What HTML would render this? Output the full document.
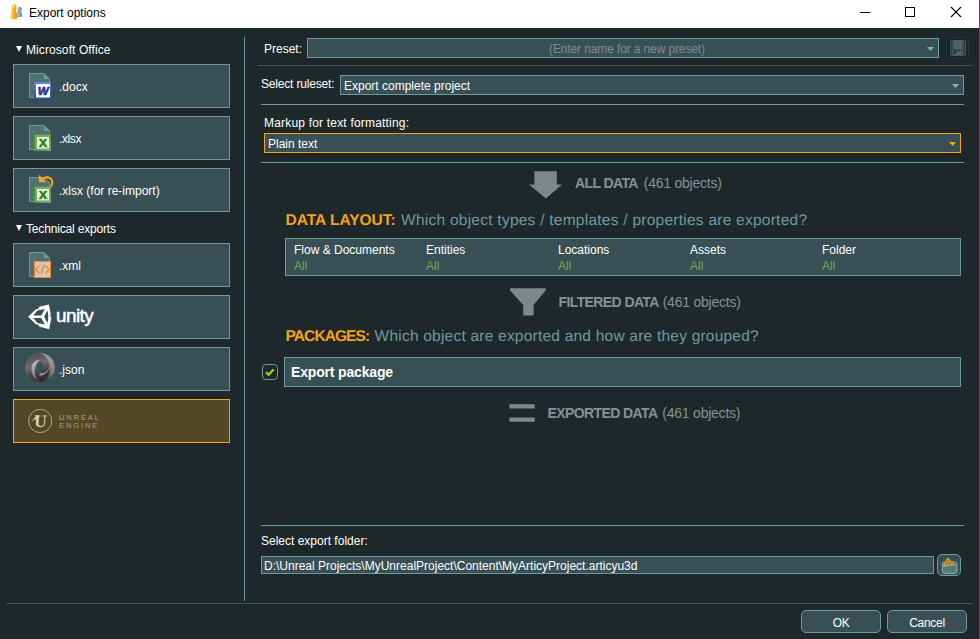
<!DOCTYPE html>
<html><head><meta charset="utf-8"><title>Export options</title>
<style>
html,body{margin:0;padding:0;}
body{width:980px;height:639px;position:relative;overflow:hidden;background:#1e282a;font-family:"Liberation Sans",sans-serif;font-size:12px;color:#fff;}
.abs{position:absolute;}
.t{position:absolute;white-space:nowrap;line-height:16px;height:16px;}
#titlebar{left:0;top:0;width:979px;height:28px;background:#fff;}
#edge{left:979px;top:0;width:1px;height:639px;background:#a8179c;}
.btn{position:absolute;left:13px;width:215px;height:42px;border:1px solid #6a9c99;background:#385055;}
.btn.sel{border-color:#f5a21c;background:#544726;}
.hl{position:absolute;height:1px;background:#6a9c99;}
.hl.dim{background:#3c565a;}
.combo{position:absolute;border:1px solid #6a9c99;background:#385055;box-sizing:border-box;}
.gray{color:#879194;}
#ph{color:#7f8c8e}
.teal{color:#6f9a9c;letter-spacing:.25px}
.org{color:#f6a21b;font-weight:bold;}
.grn{color:#66ad3e;}
.rb{position:absolute;box-sizing:border-box;border:1px solid #6a9c99;background:#385055;border-radius:5px;text-align:center;line-height:25px;}
.h13{font-size:14px;}
.h13 b{letter-spacing:-.6px}
.h13 i{font-style:normal;letter-spacing:-.23px}
.h15{font-size:15.5px;text-rendering:geometricPrecision;}
svg{overflow:visible}
</style></head><body>
<div id="titlebar" class="abs"></div>
<div id="edge" class="abs"></div>
<!-- title icon -->
<svg class="abs" style="left:8px;top:3px" width="16" height="18" viewBox="0 0 16 18">
<defs>
<linearGradient id="pg1" x1="0" y1="0" x2="1" y2="0"><stop offset="0" stop-color="#ffe14a"/><stop offset=".45" stop-color="#fbb024"/><stop offset="1" stop-color="#f58a1a"/></linearGradient>
<linearGradient id="pg2" x1="0" y1="0" x2="1" y2="0"><stop offset="0" stop-color="#a9c6d2"/><stop offset="1" stop-color="#5d8c9e"/></linearGradient>
</defs>
<path d="M9.500 6.300c0-1.500 1-2.500 2.200-2.500s2.200 1 2.200 2.500c0 1-.4 1.600-.9 2.100.9 1.200 1.200 3.200 1.200 5.100-.9.500-3.500.6-5.200.2z" fill="url(#pg2)"/>
<path d="M3.500 4.800c0-2 1-3.500 2.600-3.500s2.600 1.500 2.600 3.500c0 1.200-.4 2-.9 2.600 1.300 1.900 1.900 5 1.900 7.900-1.500.9-5.900.9-7.400 0 0-2.900.6-6 1.900-7.900-.4-.6-.7-1.400-.7-2.600z" fill="url(#pg1)"/>
<ellipse cx="5.600" cy="3.400" rx="1" ry="1.300" fill="#fff" opacity=".55"/>
</svg>
<span class="t" id="title" style="left:29px;top:5px;color:#000;">Export options</span>
<!-- window controls -->
<svg class="abs" style="left:850px;top:0" width="129" height="28" viewBox="0 0 129 28">
<path d="M10 12.500h10.500" stroke="#000" stroke-width="1" fill="none"/>
<rect x="55.500" y="7.500" width="9" height="9" stroke="#000" stroke-width="1" fill="none"/>
<path d="M101 7l10 10M111 7l-10 10" stroke="#000" stroke-width="1.100" fill="none"/>
</svg>

<!-- left panel -->
<svg class="abs" style="left:16px;top:46px" width="6" height="6"><path d="M0 0h6L3 6z" fill="#fff"/></svg>
<span class="t" id="mso" style="left:26px;top:42px;letter-spacing:.09px">Microsoft Office</span>
<div class="btn" style="top:64px"></div>
<div class="btn" style="top:116px"></div>
<div class="btn" style="top:168px"></div>
<svg class="abs" style="left:16px;top:225px" width="6" height="6"><path d="M0 0h6L3 6z" fill="#fff"/></svg>
<span class="t" id="tech" style="left:26px;top:221px;letter-spacing:-.17px">Technical exports</span>
<div class="btn" style="top:243px"></div>
<div class="btn" style="top:295px"></div>
<div class="btn" style="top:347px"></div>
<div class="btn sel" style="top:399px"></div>
<span class="t" id="docx" style="left:59px;top:79px;">.docx</span>
<span class="t" id="xlsx" style="left:59px;top:131px;letter-spacing:-.4px">.xlsx</span>
<span class="t" id="xlsx2" style="left:59px;top:183px;">.xlsx (for re-import)</span>
<span class="t" id="xml" style="left:59px;top:258px;">.xml</span>
<span class="t" id="json" style="left:59px;top:362px;">.json</span>

<!-- docx icon -->
<svg class="abs" style="left:29px;top:73px" width="22" height="26" viewBox="0 0 22 26">
<defs><linearGradient id="wg" x1="0" y1="0" x2="0" y2="1"><stop offset="0" stop-color="#6285dc"/><stop offset="1" stop-color="#2b49ad"/></linearGradient></defs>
<path d="M.5.500h14.500l5.500 5.500v18.500H.5z" fill="#4f7172" stroke="#6c9c9a"/>
<path d="M15 .5v5.500h5.500z" fill="#6c9c9a"/>
<rect x="5" y="9" width="17" height="17" fill="url(#wg)"/>
<rect x="7" y="11" width="14" height="13.500" fill="#fff"/>
<text x="14.200" y="22.200" font-family="Liberation Sans, sans-serif" font-size="11.500" font-weight="bold" font-style="italic" fill="#1f3c9c" stroke="#1f3c9c" stroke-width=".7" text-anchor="middle">W</text>
</svg>
<!-- xlsx icon -->
<svg class="abs" style="left:29px;top:125px" width="22" height="26" viewBox="0 0 22 26">
<defs><linearGradient id="xg" x1="0" y1="0" x2="1" y2="1"><stop offset="0" stop-color="#3fa516"/><stop offset=".6" stop-color="#4a9a2a"/><stop offset="1" stop-color="#7fa58a"/></linearGradient></defs>
<path d="M.5.500h14.500l5.500 5.500v18.500H.5z" fill="#4f7172" stroke="#6c9c9a"/>
<path d="M15 .5v5.500h5.500z" fill="#6c9c9a"/>
<rect x="5.500" y="9.500" width="16" height="16" fill="#7a9c92" stroke="url(#xg)"/>
<rect x="8" y="12" width="12" height="11.500" fill="#edf5d0"/>
<text x="14" y="21.600" font-family="Liberation Sans, sans-serif" font-size="10.500" font-weight="bold" fill="#1f8510" stroke="#1f8510" stroke-width=".6" text-anchor="middle" transform="translate(14 0) scale(1.150 1) translate(-14 0)">X</text>
</svg>
<!-- xlsx reimport icon -->
<svg class="abs" style="left:29px;top:177px" width="26" height="26" viewBox="0 0 26 26">
<path d="M.5.500h14.500l5.500 5.500v18.500H.5z" fill="#4f7172" stroke="#6c9c9a"/>
<rect x="5.500" y="9.500" width="16" height="16" fill="#7a9c92" stroke="url(#xg)"/>
<rect x="8" y="12" width="12" height="11.500" fill="#edf5d0"/>
<text x="14" y="21.600" font-family="Liberation Sans, sans-serif" font-size="10.500" font-weight="bold" fill="#1f8510" stroke="#1f8510" stroke-width=".6" text-anchor="middle" transform="translate(14 0) scale(1.150 1) translate(-14 0)">X</text>
<path d="M9.800-2.400v7.600h7.600l-2.500-2.500c1.500-1.500 4-1.800 5.800-.4 2.200 1.700 2.200 5.200-.6 8l1.300 1.200c3.800-3.600 3.800-8.400.6-10.900-2.800-2.200-6.500-1.800-8.800.5z" fill="#f9a21b"/>
</svg>
<!-- xml icon -->
<svg class="abs" style="left:29px;top:252px" width="22" height="26" viewBox="0 0 22 26">
<path d="M.5.500h14.500l5.500 5.500v18.500H.5z" fill="#4f7172" stroke="#6c9c9a"/>
<path d="M15 .5v5.500h5.500z" fill="#6c9c9a"/>
<rect x="5.500" y="9.500" width="16" height="16" fill="#d8c7b6" stroke="#f5862a"/>
<path d="M10 14.300l-3.200 3.200 3.200 3.200M17 14.300l3.200 3.200-3.200 3.200M15 13.600l-2.800 8" fill="none" stroke="#f5862a" stroke-width="1.400" stroke-linecap="round" stroke-linejoin="round"/>
</svg>
<!-- unity -->
<svg class="abs" style="left:27px;top:303px" width="26" height="28" viewBox="27 303 26 28">
<path fill-rule="evenodd" fill="#fff" d="M28.200 316.800L35.600 309.600 38.300 308.700 39.300 306.700 48.900 304.500 50.700 313.800 50.200 316 51.400 317.800 49.100 329.200 39.200 326.400 38.200 324.800 35.600 324z
M33.300 315.600L37.400 310.500 44.900 309 41.200 315.600z
M33.300 318L37.400 323.100 44.900 324.600 41.200 318z
M44.200 316.800L47.300 310.300Q49.200 316.800 47.300 323.300z"/>
</svg>
<span class="t" id="unity" style="left:56px;top:305px;font-size:19px;line-height:22px;height:22px;letter-spacing:-.6px;-webkit-text-stroke:.5px #fff;">unity</span>
<!-- json -->
<svg class="abs" style="left:25px;top:353px" width="30" height="30" viewBox="0 0 30 30">
<defs>
<linearGradient id="jg1" x1="0.250" y1="0.050" x2="0.600" y2="1"><stop offset="0" stop-color="#4a4a4a"/><stop offset=".35" stop-color="#6e6e6e"/><stop offset=".7" stop-color="#3a3a3a"/><stop offset="1" stop-color="#262626"/></linearGradient>
<linearGradient id="jg2" x1="0.900" y1="0.100" x2="0.400" y2="0.900"><stop offset="0" stop-color="#b8b8b8"/><stop offset=".5" stop-color="#8a8a8a"/><stop offset="1" stop-color="#3a3a3a"/></linearGradient>
<linearGradient id="jg3" x1="0.200" y1="0.200" x2="0.700" y2="1"><stop offset="0" stop-color="#c4c4c4"/><stop offset=".5" stop-color="#8c8c8c"/><stop offset="1" stop-color="#3c3c3c"/></linearGradient>
</defs>
<circle cx="15" cy="14.800" r="14.700" fill="url(#jg1)"/>
<path d="M15 .1c8.100 0 14.700 6.600 14.700 14.700S23.100 29.500 15 29.500c5.500-1 9.500-6.500 9.500-13.700C24.500 8 20.500 1.500 15 .1z" fill="url(#jg2)" opacity=".85"/>
<path d="M16 6.800c-5-.8-9.500 3.200-9.500 9.500 0 5.500 3 10.500 8.500 12.500-3-2.500-5.200-6.500-5.200-11.300 0-5 2.400-9.200 6.200-10.700z" fill="url(#jg3)" opacity=".85"/>
<path d="M14.300 22.600c5 .6 9.600-3.600 9.900-9.600-1.200 4.300-4.200 7.200-6.700 7.200-1.300 0-2.300-.6-3-1.600z" fill="#a8a8a8" opacity=".8"/>
<ellipse cx="15" cy="15" rx="3.300" ry="6" transform="rotate(8 15 15)" fill="#385055"/>
<circle cx="15" cy="14.800" r="14.300" fill="none" stroke="#8f9aa0" stroke-width=".5" opacity=".5"/>
</svg>
<!-- unreal -->
<svg class="abs" style="left:28px;top:409px" width="25" height="25" viewBox="0 0 25 25">
<circle cx="12.200" cy="12" r="11.600" fill="none" stroke="#b9ae97" stroke-width=".9"/>
<path d="M3.300 12.200c2-1.300 4-3.600 5.300-6.400l1.600.3v3.200c-2 .6-4.700 2-6.900 2.900z" fill="#d3ccbc"/>
<text x="13.400" y="18.300" font-family="Liberation Serif, serif" font-size="17.500" font-weight="bold" fill="#d3ccbc" text-anchor="middle" transform="skewX(-4)">U</text>
</svg>
<span class="t" id="ue1" style="left:59px;top:413px;font-size:7.500px;line-height:10px;height:10px;letter-spacing:1.900px;color:#aba28c;">UNREAL</span>
<span class="t" id="ue2" style="left:59px;top:421.200px;font-size:7.500px;line-height:10px;height:10px;letter-spacing:1.900px;color:#aba28c;">ENGINE</span>

<div class="abs" style="left:244px;top:37px;width:1px;height:564px;background:#6a9c99"></div>

<!-- right panel -->
<span class="t" id="preset" style="left:264px;top:41px;">Preset:</span>
<div class="combo" style="left:307px;top:38px;width:632px;height:20px;"></div>
<span class="t gray" id="ph" style="left:549px;top:41px;letter-spacing:-.12px">(Enter name for a new preset)</span>
<svg class="abs" style="left:927px;top:47px" width="7" height="4"><path d="M0 0h7L3.500 4z" fill="#7fb0ad"/></svg>
<!-- save button -->
<div class="abs" style="left:946px;top:37px;width:23px;height:22px;box-sizing:border-box;border:1px solid #27373b;border-radius:5px;background:#1a2325"></div>
<svg class="abs" style="left:950px;top:40px" width="16" height="16" viewBox="0 0 16 16">
<rect x=".5" y=".5" width="15" height="15" rx="1.200" fill="#2a3a3e" stroke="#41575b"/>
<rect x="3.500" y=".5" width="9" height="8.500" fill="#4e6568"/>
<rect x="3.500" y="11" width="9" height="4.500" fill="#4e6568"/>
<path d="M4 11.500h3.500l-3.500 3z" fill="#1e282a"/>
<path d="M3 .5v15M13 .5v15M3 9.800h10" stroke="#465c60" stroke-width="1" fill="none"/>
</svg>
<div class="hl dim" style="left:258px;top:65px;width:715px"></div>
<span class="t" id="ruleset" style="left:261px;top:76px;letter-spacing:-.18px">Select ruleset:</span>
<div class="combo" style="left:340px;top:75px;width:624px;height:20px;"></div>
<span class="t" id="ecp" style="left:344px;top:78px;">Export complete project</span>
<svg class="abs" style="left:952px;top:84px" width="7" height="4"><path d="M0 0h7L3.500 4z" fill="#7fb0ad"/></svg>
<div class="hl" style="left:261px;top:104px;width:703px"></div>
<span class="t" id="markup" style="left:264px;top:115px;letter-spacing:.19px">Markup for text formatting:</span>
<div class="combo" style="left:264px;top:133px;width:697px;height:20px;border-color:#f5a21c"></div>
<span class="t" id="plain" style="left:268px;top:136px;">Plain text</span>
<svg class="abs" style="left:949px;top:142px" width="7" height="4"><path d="M0 0h7L3.500 4z" fill="#f5a21c"/></svg>
<div class="hl" style="left:261px;top:162px;width:703px"></div>

<svg class="abs" style="left:528px;top:171px" width="35" height="28" viewBox="0 0 35 28"><path d="M6.400.3h22.400v13.100h5.300L17.900 27.600 1 13.400h5.400z" fill="#7d8888"/></svg>
<span class="t gray h13" id="alldata" style="left:575px;top:175px;"><b>ALL DATA</b> <i style="margin-left:2px">(461 objects)</i></span>
<span class="t h15" id="dl" style="left:285.500px;top:213px;"><span class="org">DATA LAYOUT:</span> <span class="teal" style="margin-left:1px;">Which object types / templates / properties are exported?</span></span>
<div class="combo" style="left:285px;top:238px;width:676px;height:38px;"></div>
<span class="t" id="c1" style="left:294px;top:242px;">Flow &amp; Documents</span>
<span class="t" id="c2" style="left:426px;top:242px;">Entities</span>
<span class="t" id="c3" style="left:558px;top:242px;">Locations</span>
<span class="t" id="c4" style="left:690px;top:242px;">Assets</span>
<span class="t" id="c5" style="left:822px;top:242px;">Folder</span>
<span class="t grn" style="left:294px;top:258px;">All</span>
<span class="t grn" style="left:426px;top:258px;">All</span>
<span class="t grn" style="left:558px;top:258px;">All</span>
<span class="t grn" style="left:690px;top:258px;">All</span>
<span class="t grn" style="left:822px;top:258px;">All</span>
<svg class="abs" style="left:510px;top:288px" width="36" height="28" viewBox="0 0 36 28"><path d="M0 .3h35.700v2L23.600 16.900v10.500H13.200V16.900L0 2.300z" fill="#7d8888"/></svg>
<span class="t gray h13" id="fdata" style="left:558.500px;top:294px;"><b>FILTERED DATA</b> <i>(461 objects)</i></span>
<span class="t h15" id="pk" style="left:285.500px;top:329px;"><span class="org" style="letter-spacing:-.9px">PACKAGES:</span> <span class="teal" style="margin-left:1px;letter-spacing:.22px">Which object are exported and how are they grouped?</span></span>
<div class="abs" style="left:262px;top:364px;width:16px;height:16px;box-sizing:border-box;border:1px solid #6a9c99;border-radius:4px;background:#1e282a"></div>
<svg class="abs" style="left:262px;top:364px" width="16" height="16" viewBox="0 0 16 16"><path d="M4 8.200l2.600 2.600 5-5.600" fill="none" stroke="#a4c81c" stroke-width="2.300"/></svg>
<div class="combo" style="left:284px;top:357px;width:677px;height:30px;"></div>
<span class="t" id="ep" style="left:291px;top:364px;font-size:14px;font-weight:bold;letter-spacing:-.17px">Export package</span>
<svg class="abs" style="left:509px;top:404px" width="26" height="18" viewBox="0 0 26 18"><path d="M.4.300h25.300v4.300H.4zM.4 13.400h25.300v4.300H.4z" fill="#7d8888"/></svg>
<span class="t gray h13" id="edata" style="left:547.500px;top:405px;"><b>EXPORTED DATA</b> <i style="margin-left:1px">(461 objects)</i></span>

<div class="hl" style="left:261px;top:525px;width:703px"></div>
<span class="t" id="sef" style="left:261px;top:533px;">Select export folder:</span>
<div class="combo" style="left:261px;top:556px;width:673px;height:18px;"></div>
<span class="t" id="path" style="left:264px;top:558px;">D:\Unreal Projects\MyUnrealProject\Content\MyArticyProject.articyu3d</span>
<div class="rb" style="left:937px;top:554px;width:24px;height:22px;"></div>
<svg class="abs" style="left:941px;top:557px" width="17" height="17" viewBox="0 0 17 17">
<rect x="1.400" y="4.900" width="14.400" height="11.300" rx="1.600" fill="#4f7072" stroke="#7fb0ad" stroke-width=".9"/>
<path d="M2.300 8.600L6.800 1l7 6.600z" fill="#b4832b" stroke="#f5a21c" stroke-width="1" stroke-linejoin="round"/>
<path d="M1.400 9.200h5.400l.4-1h8.600v6.400q0 1.600-1.600 1.600H3q-1.600 0-1.600-1.600z" fill="#587a7b" stroke="#7fb0ad" stroke-width=".9"/>
</svg>
<div class="hl dim" style="left:6px;top:603px;width:967px"></div>
<div class="rb" id="ok" style="left:801px;top:610px;width:80px;height:23px;letter-spacing:-.3px">OK</div>
<div class="rb" id="cancel" style="left:887px;top:610px;width:80px;height:23px;letter-spacing:-.3px">Cancel</div>
</body></html>
